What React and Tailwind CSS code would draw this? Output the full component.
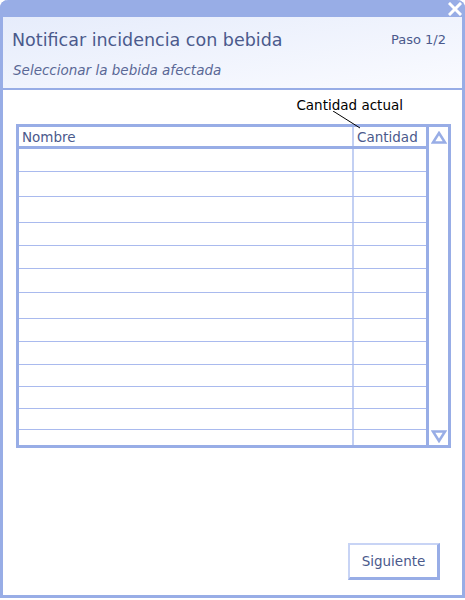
const rowHeights = [23, 25, 26, 23, 23, 24, 26, 23, 23, 22, 22, 21, 15];

const App = () => {
  return (
    <div className="w-[465px] h-[600px] bg-white" style={{ fontFamily: '"DejaVu Sans", Verdana, sans-serif' }}>
      <div className="relative h-[598px] flex flex-col border-x-[3px] border-b-[3px] border-[#98ade6] rounded-t-[8px] bg-white">
        {/* Title bar */}
        <div className="h-[17px] -mx-[3px] bg-[#98ade6] rounded-t-[8px] flex justify-end items-center pr-[3px]">
          <svg width="14" height="14" viewBox="0 0 14 14">
            <path d="M2 2L12 12M12 2L2 12" stroke="white" strokeWidth="3" strokeLinecap="square" />
          </svg>
        </div>

        {/* Header */}
        <div className="h-[73px] border-b-[2px] border-[#98ade6] bg-gradient-to-br from-[#e6ecfb] to-[#fafbff] px-[9px] flex flex-col">
          <div className="flex justify-between items-start pt-[12px]">
            <h1 className="text-[17.5px] leading-[22px] text-[#4b5a8c]">Notificar incidencia con bebida</h1>
            <span className="text-[13px] leading-[16px] text-[#4b5a8c] pt-[3px] pr-[7px]">Paso 1/2</span>
          </div>
          <p className="mt-[11px] text-[13.5px] leading-[17px] italic text-[#5a6896] pl-[1px]">Seleccionar la bebida afectada</p>
        </div>

        {/* Body */}
        <div className="flex-1 relative flex flex-col px-[13px]">
          <div className="h-[34px] flex justify-end pr-[46px] pt-[7px]">
            <span className="text-[13.5px] leading-[16px] text-black">Cantidad actual</span>
          </div>
          <svg className="absolute left-[330px] top-[21px]" width="30" height="20" viewBox="0 0 30 20">
            <path d="M0 0L27 17" stroke="black" strokeWidth="1" />
          </svg>

          {/* Table */}
          <div className="w-[435px] flex border-[3px] border-[#98ade6]">
            <div className="flex-1 flex flex-col">
              <div className="h-[22px] flex border-b-[3px] border-[#98ade6] text-[13.5px] leading-[21px] text-[#4b5a8c]">
                <div className="w-[333px] pl-[3px]">Nombre</div>
                <div className="flex-1 border-l-[2px] border-[#c3d0f3] pl-[3px]">Cantidad</div>
              </div>
              {rowHeights.map((h, i) => (
                <div
                  key={i}
                  className={`flex ${i < rowHeights.length - 1 ? 'border-b border-[#a9baee]' : ''}`}
                  style={{ height: h }}
                >
                  <div className="w-[333px]" />
                  <div className="flex-1 border-l-[2px] border-[#c3d0f3]" />
                </div>
              ))}
            </div>
            <div className="w-[22px] border-l-[3px] border-[#98ade6] flex flex-col justify-between items-center pt-[4px] pb-[2px]">
              <svg width="16" height="13" viewBox="0 0 16 13">
                <path d="M8 2L14 11.5H2Z" fill="none" stroke="#98ade6" strokeWidth="2.5" strokeLinejoin="miter" />
              </svg>
              <svg width="16" height="13" viewBox="0 0 16 13">
                <path d="M8 11L14 1.5H2Z" fill="none" stroke="#98ade6" strokeWidth="2.5" strokeLinejoin="miter" />
              </svg>
            </div>
          </div>

          <div className="flex-1 flex justify-end items-end pb-[15px] pr-[9px]">
            <button className="w-[92px] h-[37px] bg-white border-t-[2px] border-l-[2px] border-r-[3px] border-b-[3px] border-t-[#c8d4f5] border-l-[#c8d4f5] border-r-[#98ade6] border-b-[#98ade6] text-[13.5px] text-[#4b5a8c]">
              Siguiente
            </button>
          </div>
        </div>
      </div>
    </div>
  );
};

export default App;
